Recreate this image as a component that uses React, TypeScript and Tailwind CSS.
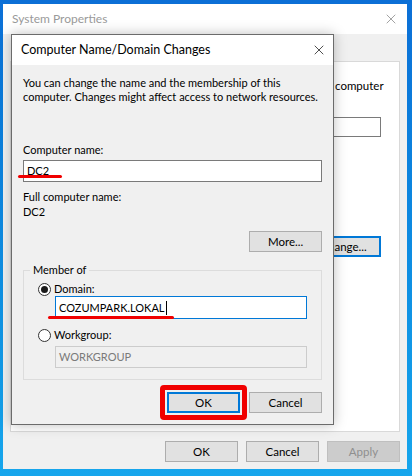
import { X } from "lucide-react";

const font = "font-['Lato','Liberation_Sans',Arial,sans-serif]";

function WinButton({
  label,
  primary,
  disabled,
  className = "",
}: {
  label: string;
  primary?: boolean;
  disabled?: boolean;
  className?: string;
}) {
  return (
    <button
      type="button"
      className={
        "flex h-[21px] w-[73px] items-center justify-center text-[11.5px] " +
        (disabled
          ? "border border-[#bfbfbf] bg-[#cccccc] text-[#8f8f8f] "
          : primary
          ? "border-2 border-[#0078d7] bg-[#e1e1e1] text-black "
          : "border border-[#adadad] bg-[#e1e1e1] text-black ") +
        className
      }
    >
      {label}
    </button>
  );
}

function Radio({ checked }: { checked?: boolean }) {
  return (
    <span className="flex h-[13px] w-[13px] items-center justify-center rounded-full border border-[#333333] bg-white">
      {checked && <span className="h-[7px] w-[7px] rounded-full bg-[#1a1a1a]" />}
    </span>
  );
}

export default function App() {
  return (
    <div
      className={`relative h-[476px] w-[412px] overflow-hidden bg-gradient-to-b from-[#0c6fd6] to-[#17a6ec] pb-[7px] pl-[3px] pr-[5px] pt-[4px] ${font}`}
    >
      {/* System Properties (behind) */}
      <div className="flex h-full flex-col bg-[#f0f0f0]">
        <div className="flex h-[30px] items-center justify-between bg-white pl-[9px] pr-[8px]">
          <span className="text-[12px] text-[#9a9a9a]">System Properties</span>
          <X className="h-[16px] w-[16px] text-[#8a8a8a]" strokeWidth={1.2} />
        </div>
        <div className="flex-1 px-[7px] pt-[27px]">
          <div className="flex h-[371px] flex-col items-end border border-[#d9d9d9] bg-white pr-[18px] pt-[16px] text-[11.5px] text-black">
            <div className="w-[46px] leading-[15px]">computer</div>
            <div className="mt-[24px] h-[20px] w-[200px] border border-[#7a7a7a] bg-white" />
            <div className="mt-[99px] flex h-[21px] w-[75px] items-center justify-center border-2 border-[#0078d7] bg-[#e1e1e1]">
              Change...
            </div>
          </div>
          <div className="mt-[9px] flex justify-end gap-[8px]">
            <WinButton label="OK" />
            <WinButton label="Cancel" />
            <WinButton label="Apply" disabled />
          </div>
        </div>
      </div>

      {/* Computer Name/Domain Changes dialog */}
      <div className="absolute left-[11px] top-[34px] flex h-[391px] w-[323px] flex-col border border-[#6b6b6b] bg-[#f0f0f0] shadow-[0_0_12px_rgba(0,0,0,0.25)]">
        <div className="flex h-[30px] shrink-0 items-center justify-between bg-white pl-[9px] pr-[6px]">
          <span className="text-[12.5px] text-black">Computer Name/Domain Changes</span>
          <X className="h-[16px] w-[16px] text-[#222]" strokeWidth={1.2} />
        </div>
        <div className="flex flex-1 flex-col px-[11px] pt-[11px] text-[11px] leading-[14px] text-black">
          <p className="whitespace-nowrap">
            You can change the name and the membership of this
            <br />
            computer. Changes might affect access to network resources.
          </p>

          <div className="mt-[39px]">Computer name:</div>
          <div className="relative mt-[3px]">
            <div className="flex h-[22px] items-center border border-[#7a7a7a] bg-white pl-[3px]">DC2</div>
            <div className="absolute left-[-5px] top-[15px] h-[3px] w-[44px] rounded-full bg-[#f00000]" />
          </div>

          <div className="mt-[8px]">Full computer name:</div>
          <div className="mt-[1px]">DC2</div>

          <div className="mt-[12px] flex justify-end">
            <WinButton label="More..." />
          </div>

          <fieldset className="mt-[11px] h-[117px] border border-[#dcdcdc] pl-[14px] pr-[14px]">
            <legend className="ml-[-8px] px-[3px] leading-[14px]">Member of</legend>
            <label className="mt-[5px] flex items-center gap-[3px]">
              <Radio checked />
              <span>Domain:</span>
            </label>
            <div className="relative ml-[17px] mt-[0px]">
              <div className="flex h-[23px] items-center border border-[#0078d7] bg-white pl-[3px]">
                COZUMPARK.LOKAL
                <span className="ml-[1px] h-[14px] w-[1px] bg-black" />
              </div>
              <div className="absolute left-[-7px] top-[20px] h-[3px] w-[126px] rounded-full bg-[#f00000]" />
            </div>
            <label className="mt-[9px] flex items-center gap-[3px]">
              <Radio />
              <span>Workgroup:</span>
            </label>
            <div className="ml-[17px] mt-[4px] flex h-[22px] items-center border border-[#cccccc] bg-[#f0f0f0] pl-[3px] text-[#7a7a7a]">
              WORKGROUP
            </div>
          </fieldset>

          <div className="mt-[12px] flex justify-end gap-[9px]">
            <div className="relative">
              <WinButton label="OK" primary />
              <div className="absolute inset-[-7px] rounded-[4px] border-[5px] border-[#f00000]" />
            </div>
            <WinButton label="Cancel" />
          </div>
        </div>
      </div>
    </div>
  );
}
